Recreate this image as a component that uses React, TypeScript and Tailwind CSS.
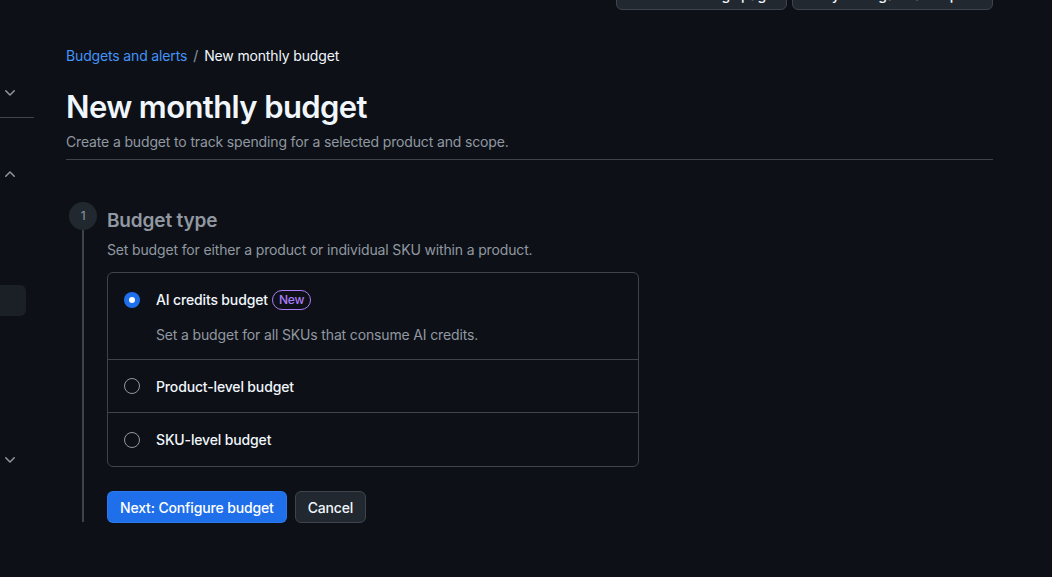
import React from 'react';

const Chevron = ({ up = false }: { up?: boolean }) => (
  <svg width="16" height="16" viewBox="0 0 16 16" fill="#9198a1" className={up ? 'rotate-180' : ''}>
    <path d="M12.78 5.22a.749.749 0 0 1 0 1.06l-4.25 4.25a.749.749 0 0 1-1.06 0L3.22 6.28a.749.749 0 1 1 1.06-1.06L8 8.939l3.72-3.719a.749.749 0 0 1 1.06 0Z" />
  </svg>
);

const Radio = ({ checked = false }: { checked?: boolean }) =>
  checked ? (
    <span className="w-4 h-4 rounded-full bg-[#1f6feb] flex items-center justify-center">
      <span className="w-[6px] h-[6px] rounded-full bg-white" />
    </span>
  ) : (
    <span className="w-4 h-4 rounded-full border border-[#9198a1]" />
  );

export default function App() {
  return (
    <div
      className="w-[1052px] h-[577px] bg-[#0d1117] text-[#f0f6fc] overflow-hidden relative flex tracking-[-0.15px]"
      style={{ fontFamily: 'Inter, "Noto Sans", sans-serif' }}
    >
      {/* sidebar stub */}
      <div className="w-[34px] shrink-0 flex flex-col">
        <div className="pt-[85px] pl-[2px]"><Chevron /></div>
        <div className="mt-[16px] h-px w-[34px] bg-[#3d444d]" />
        <div className="mt-[48px] pl-[2px]"><Chevron up /></div>
        <div className="mt-[103px] w-[26px] h-[31px] rounded-r-md bg-[#1b1f26]" />
        <div className="mt-[136px] pl-[2px]"><Chevron /></div>
      </div>

      <div className="w-[927px] ml-[32px] flex flex-col">
        {/* top buttons */}
        <div className="flex justify-end gap-[5px] mt-[-22px] h-[32px]">
          <div className="w-[171px] h-[32px] rounded-md border border-[#3d444d] bg-[#212830] flex items-center px-3 gap-2 text-[14px] font-medium whitespace-nowrap">
            <svg width="16" height="16" viewBox="0 0 16 16" fill="#9198a1">
              <path d="M7.78 12.53a.75.75 0 0 1-1.06 0L2.47 8.28a.75.75 0 0 1 0-1.06l4.25-4.25a.751.751 0 0 1 1.042.018.751.751 0 0 1 .018 1.042L4.81 7h7.44a.75.75 0 0 1 0 1.5H4.81l2.97 2.97a.75.75 0 0 1 0 1.06Z" />
            </svg>
            Go to settings page
          </div>
          <div className="w-[201px] h-[32px] rounded-md border border-[#3d444d] bg-[#212830] flex items-center justify-center text-[14px] font-medium whitespace-nowrap">
            Go to your organization profile
          </div>
        </div>

        {/* breadcrumb */}
        <div className="mt-[36px] text-[14px] leading-[20px] flex items-center">
          <span className="text-[#4493f8]">Budgets and alerts</span>
          <span className="text-[#9198a1] mx-[6px]">/</span>
          <span>New monthly budget</span>
        </div>

        <h1 className="mt-[21px] text-[31px] leading-[40px] font-semibold tracking-[-0.6px]">New monthly budget</h1>
        <p className="mt-[5px] text-[14px] leading-[20px] text-[#9198a1]">
          Create a budget to track spending for a selected product and scope.
        </p>
        <div className="mt-[7px] h-px bg-[#3d444d]" />

        {/* step */}
        <div className="mt-[42px] flex">
          <div className="w-[34px] shrink-0 flex flex-col items-center">
            <div className="w-[28px] h-[28px] rounded-full bg-[#212830] flex items-center justify-center text-[12px] text-[#9198a1]">
              1
            </div>
            <div className="w-[2px] h-[292px] bg-[#3d444d]" />
          </div>
          <div className="ml-[7px] flex flex-col">
            <h2 className="mt-[6px] text-[19px] leading-[26px] font-semibold text-[#9198a1]">Budget type</h2>
            <p className="mt-[6px] text-[14px] leading-[20px] text-[#9198a1]">
              Set budget for either a product or individual SKU within a product.
            </p>

            <div className="mt-[12px] w-[532px] rounded-md border border-[#3d444d] flex flex-col">
              <div className="px-4 pt-[17px] pb-[14px] border-b border-[#3d444d]">
                <div className="flex items-center gap-[16px]">
                  <Radio checked />
                  <span className="text-[14px] leading-[20px] font-medium flex items-center gap-[4px]">
                    AI credits budget
                    <span className="px-[6px] h-[20px] leading-[18px] rounded-full border border-[#ab7df8] text-[#ab7df8] text-[12px] font-medium">
                      New
                    </span>
                  </span>
                </div>
                <p className="mt-[15px] ml-[32px] text-[14px] leading-[20px] text-[#9198a1]">
                  Set a budget for all SKUs that consume AI credits.
                </p>
              </div>
              <div className="px-4 h-[53px] flex items-center gap-[16px] border-b border-[#3d444d]">
                <Radio />
                <span className="text-[14px] font-medium">Product-level budget</span>
              </div>
              <div className="px-4 h-[53px] flex items-center gap-[16px]">
                <Radio />
                <span className="text-[14px] font-medium">SKU-level budget</span>
              </div>
            </div>

            <div className="mt-[24px] flex gap-[8px]">
              <button className="h-[32px] px-[12px] rounded-md bg-[#1f6feb] border border-[#4493f8]/30 text-[14px] font-medium text-white">
                Next: Configure budget
              </button>
              <button className="h-[32px] px-[12px] rounded-md bg-[#212830] border border-[#3d444d] text-[14px] font-medium">
                Cancel
              </button>
            </div>
          </div>
        </div>
      </div>
    </div>
  );
}
